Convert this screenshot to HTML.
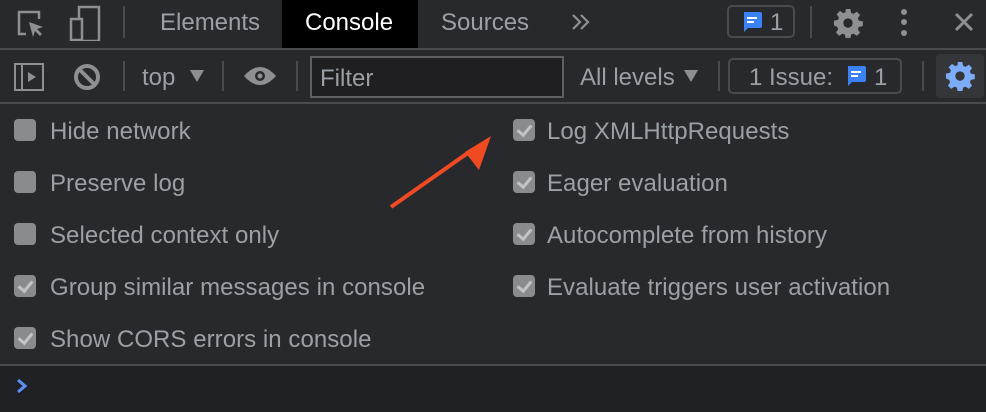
<!DOCTYPE html>
<html><head><style>
body{margin:0;width:986px;height:412px;background:#28292d;font-family:"Liberation Sans",sans-serif;color:#9aa0a6;position:relative;overflow:hidden}
.a{position:absolute}
.t{font-size:24px;white-space:nowrap}
.line{position:absolute;left:0;width:986px;height:2px;background:#4a4b4f}
.vs{position:absolute;width:2px;background:#4a4b4f}
.cb{position:absolute;width:22px;height:22px;border-radius:4px;background:#8a8b8e}
.cb.c::after{content:"";position:absolute;left:7px;top:3px;width:6px;height:11px;border:solid #c4c4c6;border-width:0 3px 3px 0;transform:rotate(40deg)}
.lbl{position:absolute;font-size:24px;letter-spacing:0.05px;color:#9aa0a6;white-space:nowrap}
</style></head><body>
<svg width="0" height="0" style="position:absolute"><defs>
<g id="gear"><path d="M13.5 1h5l.8 4.2 2.6 1.1 3.5-2.4 3.5 3.5-2.4 3.5 1.1 2.6 4.2.8v5l-4.2.8-1.1 2.6 2.4 3.5-3.5 3.5-3.5-2.4-2.6 1.1-.8 4.2h-5l-.8-4.2-2.6-1.1-3.5 2.4-3.5-3.5 2.4-3.5-1.1-2.6L1 18.5v-5l4.2-.8 1.1-2.6-2.4-3.5 3.5-3.5 3.5 2.4 2.6-1.1z"/></g>
</defs></svg>
<!-- top bar -->
<svg class="a" style="left:15px;top:8px" width="32" height="32" viewBox="0 0 32 32"><path d="M11 26H4V4h20v7" fill="none" stroke="#8e8f93" stroke-width="2.5"/><path d="M14 14l14 5-6 2 5 5-2 2-5-5-2 6z" fill="#8e8f93"/></svg>
<svg class="a" style="left:69px;top:5px" width="32" height="36" viewBox="0 0 32 36"><path d="M10 13V2h20v34H10" fill="none" stroke="#8e8f93" stroke-width="2.5"/><rect x="2" y="14" width="11" height="21" fill="none" stroke="#8e8f93" stroke-width="2.5"/></svg>
<div class="vs" style="left:123px;top:6px;height:32px"></div>
<div class="a t" style="left:160px;top:9px;color:#9aa0a6">Elements</div>
<div class="a" style="left:282px;top:0;width:136px;height:48px;background:#000"></div>
<div class="a t" style="left:305px;top:9px;color:#fff">Console</div>
<div class="a t" style="left:441px;top:9px">Sources</div>
<svg class="a" style="left:572px;top:14px" width="18" height="16"><path d="M1 1l7 7-7 7M9 1l7 7-7 7" fill="none" stroke="#8e8f93" stroke-width="2.2"/></svg>
<div class="a" style="left:727px;top:5px;width:68px;height:33px;border:2px solid #4a4b4f;border-radius:5px;box-sizing:border-box"></div>
<svg class="a" style="left:741px;top:11px" width="22" height="22" viewBox="0 0 22 22"><path d="M3 1h16a2 2 0 0 1 2 2v12a2 2 0 0 1-2 2H7l-4 4z" fill="#3b82f6"/><rect x="6" y="6" width="10" height="2" fill="#fff"/><rect x="6" y="10" width="7" height="2" fill="#fff"/></svg>
<div class="a t" style="left:770px;top:9px">1</div>
<div class="vs" style="left:810px;top:6px;height:32px"></div>
<svg class="a" style="left:833px;top:8px" width="30" height="30" viewBox="0 0 32 32"><use href="#gear" fill="#8e8f93"/><circle cx="16" cy="16" r="5" fill="#28292d"/></svg>
<svg class="a" style="left:898px;top:9px" width="12" height="28"><circle cx="6" cy="3" r="3" fill="#8e8f93"/><circle cx="6" cy="13" r="3" fill="#8e8f93"/><circle cx="6" cy="24" r="3" fill="#8e8f93"/></svg>
<svg class="a" style="left:953px;top:11px" width="22" height="22"><path d="M3 3l16 16M19 3L3 19" stroke="#8e8f93" stroke-width="3"/></svg>
<div class="line" style="top:48px"></div>
<!-- toolbar 2 -->
<svg class="a" style="left:14px;top:63px" width="31" height="28"><rect x="1" y="1" width="28" height="26" fill="none" stroke="#8e8f93" stroke-width="2"/><line x1="8" y1="1" x2="8" y2="27" stroke="#8e8f93" stroke-width="2"/><path d="M14 9l8 5-8 5z" fill="#8e8f93"/></svg>
<svg class="a" style="left:73px;top:63px" width="28" height="28"><circle cx="14" cy="14" r="11" fill="none" stroke="#8e8f93" stroke-width="4"/><line x1="6" y1="6" x2="22" y2="22" stroke="#8e8f93" stroke-width="4"/></svg>
<div class="vs" style="left:123px;top:61px;height:30px"></div>
<div class="a t" style="left:142px;top:64px">top</div>
<svg class="a" style="left:190px;top:70px" width="14" height="12"><path d="M0 0h14L7 12z" fill="#8e8f93"/></svg>
<div class="vs" style="left:222px;top:61px;height:30px"></div>
<svg class="a" style="left:243px;top:65px" width="34" height="22"><path d="M1 11Q17-7 33 11Q17 29 1 11z" fill="#8e8f93"/><circle cx="17" cy="11" r="5" fill="#28292d"/><circle cx="17" cy="11" r="2.5" fill="#8e8f93"/></svg>
<div class="vs" style="left:296px;top:61px;height:30px"></div>
<div class="a" style="left:310px;top:56px;width:254px;height:42px;border:2px solid #5f6064;background:#1f1f22;box-sizing:border-box"></div>
<div class="a t" style="left:320px;top:65px">Filter</div>
<div class="a t" style="left:580px;top:64px">All levels</div>
<svg class="a" style="left:684px;top:70px" width="14" height="12"><path d="M0 0h14L7 12z" fill="#8e8f93"/></svg>
<div class="vs" style="left:718px;top:61px;height:30px"></div>
<div class="a" style="left:728px;top:58px;width:174px;height:36px;border:2px solid #4a4b4f;border-radius:5px;box-sizing:border-box"></div>
<div class="a t" style="left:749px;top:64px">1 Issue:</div>
<svg class="a" style="left:845px;top:65px" width="22" height="22" viewBox="0 0 22 22"><path d="M3 1h16a2 2 0 0 1 2 2v12a2 2 0 0 1-2 2H7l-4 4z" fill="#3b82f6"/><rect x="6" y="6" width="10" height="2" fill="#fff"/><rect x="6" y="10" width="7" height="2" fill="#fff"/></svg>
<div class="a t" style="left:874px;top:64px">1</div>
<div class="vs" style="left:922px;top:61px;height:30px"></div>
<div class="a" style="left:936px;top:54px;width:48px;height:44px;background:#35363a;border-radius:3px"></div>
<svg class="a" style="left:945px;top:61px" width="30" height="30" viewBox="0 0 32 32"><use href="#gear" fill="#7cacf8"/><circle cx="16" cy="16" r="5" fill="#35363a"/></svg>
<div class="line" style="top:102px"></div>
<!-- checkboxes -->
<div class="cb" style="left:14px;top:119px"></div><div class="lbl" style="left:50px;top:118px">Hide network</div>
<div class="cb" style="left:14px;top:171px"></div><div class="lbl" style="left:50px;top:170px">Preserve log</div>
<div class="cb" style="left:14px;top:223px"></div><div class="lbl" style="left:50px;top:222px">Selected context only</div>
<div class="cb c" style="left:14px;top:275px"></div><div class="lbl" style="left:50px;top:274px">Group similar messages in console</div>
<div class="cb c" style="left:14px;top:327px"></div><div class="lbl" style="left:50px;top:326px">Show CORS errors in console</div>
<div class="cb c" style="left:513px;top:119px"></div><div class="lbl" style="left:547px;top:118px">Log XMLHttpRequests</div>
<div class="cb c" style="left:513px;top:171px"></div><div class="lbl" style="left:547px;top:170px">Eager evaluation</div>
<div class="cb c" style="left:513px;top:223px"></div><div class="lbl" style="left:547px;top:222px">Autocomplete from history</div>
<div class="cb c" style="left:513px;top:275px"></div><div class="lbl" style="left:547px;top:274px">Evaluate triggers user activation</div>
<!-- arrow -->
<svg class="a" style="left:380px;top:120px" width="120" height="100"><line x1="11" y1="87" x2="92" y2="30" stroke="#f04a23" stroke-width="4"/><path d="M111 16L85 32L99 50z" fill="#f04a23"/></svg>
<div class="a" style="left:0;top:364px;width:986px;height:48px;background:#202124"></div>
<div class="line" style="top:364px"></div>
<svg class="a" style="left:16px;top:379px" width="12" height="14"><path d="M2 1l7 6-7 6" fill="none" stroke="#5c8ff5" stroke-width="3"/></svg>
</body></html>
